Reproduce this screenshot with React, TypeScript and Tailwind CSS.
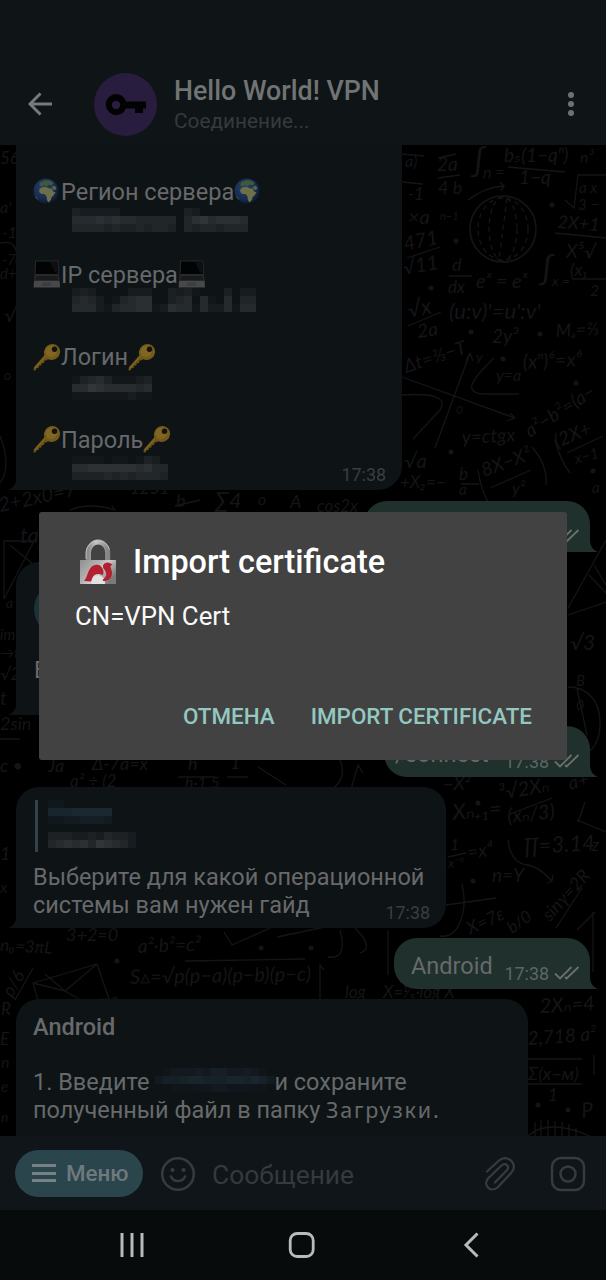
import React from "react";

const roboto = "font-['Roboto','Noto_Sans',sans-serif]";

function Mosaic({ rows, color, className }: { rows: string[]; color: string; className: string }) {
  const w = rows[0].length * 8;
  const h = rows.length * 8;
  return (
    <svg width={w} height={h} viewBox={`0 0 ${w} ${h}`} className={className} shapeRendering="crispEdges">
      {rows.map((row, y) =>
        row.split("").map((c, x) =>
          c === "0" ? null : (
            <rect key={`${x}-${y}`} x={x * 8} y={y * 8} width="8" height="8" fill={color} opacity={Number(c) / 9} />
          ),
        ),
      )}
    </svg>
  );
}

function Globe() {
  return (
    <svg width="28" height="28" viewBox="0 0 28 28" className="block shrink-0">
      <defs>
        <radialGradient id="sea" cx="0.4" cy="0.35" r="0.7">
          <stop offset="0" stopColor="#26436a" />
          <stop offset="0.7" stopColor="#16284e" />
          <stop offset="1" stopColor="#0c1733" />
        </radialGradient>
      </defs>
      <circle cx="13" cy="13" r="12.5" fill="url(#sea)" />
      <path d="M7 4.2 12 2.2l5 .3 3.600 2.300-1.600 2.700-3.500-.8-2 1.500-3-1-2.500 1.200L6.500 7z" fill="#41583a" />
      <path d="M6.500 11 9 9.300l4-.3 2.500 1.200 3.200.3 1.500 3 2.300.7-1.800 3-2 1.800-.8 3-2.400 2.600-1.600-2.600-.4-3.500-2-2.500H8.500L6.200 14z" fill="#6d6f48" />
      <path d="m18.500 9 3-1.500 2 2.500-1.500 2.300-2-.8z" fill="#59663f" />
      <path d="M2 17.500 4.500 20l.8 2L3 20z" fill="#41583a" />
    </svg>
  );
}

function Laptop() {
  return (
    <svg width="28" height="28" viewBox="0 0 28 28" className="block shrink-0">
      <path d="M2.500 1h22.500l.5 13.500H2z" fill="#020304" stroke="#2c2e30" strokeWidth="0.900" />
      <path d="M17 2h7.300l.4 11h-2.500z" fill="#0e0f10" />
      <path d="M1.500 15h24.500l.7 6H1z" fill="#26282a" />
      <path d="M3 17h21.500M2.500 19h22.500" stroke="#0a0b0c" strokeWidth="0.900" />
      <path d="M1 21h25.700l.3 6.500H.5z" fill="#46484a" />
      <path d="M9.500 22.500h8l.5 3.500h-9z" fill="#3b3d3f" />
    </svg>
  );
}

function KeyEmoji() {
  return (
    <svg width="28" height="28" viewBox="0 0 28 28" className="block shrink-0">
      <path
        d="M12 11.500.8 24.200.5 27.500l2.300-.2.600-2 2.200-.3.400-2.200 2.300-.3.400-2.300 2.300-.3.500-2.300 2.500-.4 1.500-2z"
        fill="#6b5219"
      />
      <path d="M12.500 13 2 25" stroke="#8a6c28" strokeWidth="1" />
      <ellipse cx="19" cy="9" rx="8.300" ry="7.800" fill="#735a1c" transform="rotate(-40 19 9)" />
      <ellipse cx="18.300" cy="8.300" rx="6" ry="5.500" fill="#806523" transform="rotate(-40 18.300 8.300)" />
      <circle cx="21.500" cy="6.200" r="2.700" fill="#14120b" />
    </svg>
  );
}

function Checks() {
  return (
    <svg width="26" height="14" viewBox="0 0 26 14" className="block shrink-0" fill="none" stroke="#68716d" strokeWidth="1.800">
      <path d="m1 7.500 5 5L17.500 1M11 11l1.600 1.500L24.500 1" />
    </svg>
  );
}

function LeftTail() {
  return (
    <svg width="12" height="14" viewBox="0 0 12 14" className="absolute bottom-0 -left-2">
      <path d="M8 0v3.500C8 9 4.500 12 0 14h12V0z" fill="#0e1316" />
    </svg>
  );
}

function OutBubble({ className, children }: { className: string; children?: React.ReactNode }) {
  return (
    <div className={`relative mr-4 flex h-[51px] shrink-0 items-end self-end rounded-t-[23px] rounded-bl-[23px] bg-[#20302c] ${className}`}>
      {children}
      <svg width="12" height="16" viewBox="0 0 12 16" className="absolute -right-2 bottom-0">
        <path d="M4 0v3.500C4 10 7 14 12 16H0V0z" fill="#20302c" />
      </svg>
    </div>
  );
}

type Note = [number, number, string, number?, number?];
const notes: Note[] = [
  [0, 164, "56", 17], [0, 213, "a'", 16], [2, 238, "-1", 16], [2, 265, "-7", 15], [0, 279, "d+", 15], [4, 322, "√", 20], [4, 380, "o", 14],
  [0, 512, "2+2x0=7", 20, -12], [130, 494, "1251", 17], [176, 507, "b", 18], [215, 508, "∑4", 22], [258, 505, "o", 16], [290, 508, "A", 18], [317, 512, "cos2x", 17],
  [20, 543, "ta", 22], [6, 608, "a", 14], [0, 640, "im", 15], [0, 658, "→t", 14], [0, 680, "√2", 17], [0, 705, "t", 20], [0, 730, "2sin", 18],
  [0, 772, "c •", 18], [48, 772, "Ja", 18], [92, 770, "Δ-7a=x", 18], [188, 770, "h", 18], [230, 769, "1", 18], [70, 787, "a² ÷ (2", 17], [185, 788, "h·1   5", 16],
  [0, 860, "1", 18], [0, 893, "x", 16], [0, 951, "n₀=3πL", 17, 3], [66, 941, "3+2=0", 18], [138, 953, "a²·b²=c²", 19, -2], [12, 998, "ρ/6", 18, -60], [110, 1005, "a", 15],
  [130, 984, "S▵=√p(p−a)(p−b)(p−c)", 20, -1], [345, 998, "log", 17], [383, 998, "X=⅟₅·log X", 17], [1, 1015, "R", 17], [0, 1045, "E", 17], [1, 1068, "n", 16], [1, 1092, "e", 15], [1, 1122, "n", 14],
  [405, 167, "a)", 16], [437, 171, "2a", 19], [438, 194, "4 b", 18], [472, 172, "∫", 32], [483, 178, "n =", 16], [504, 162, "bₛ(1−qⁿ)", 19], [519, 184, "1−q", 19], [580, 163, "n³", 16],
  [408, 200, "-1", 17], [408, 224, "×a", 20], [440, 220, "n−1", 11], [405, 251, "471", 20, -12], [404, 275, "√11", 20, -10], [452, 271, "d", 18], [448, 293, "dx", 17], [476, 288, "eˣ = eˣ", 20], [540, 280, "∫", 32], [552, 286, "x =", 14],
  [579, 193, "a x", 15], [578, 210, "3 −", 15], [557, 228, "2X+1", 18, 4], [566, 258, "X⁵√", 19], [570, 276, "(x₁", 17], [590, 296, "2", 16],
  [409, 318, "√x", 22, -12], [418, 338, "2a", 19, -8], [449, 319, "(u:v)'=u':v'", 22], [492, 343, "2y³", 19], [556, 337, "Mₐ=⅔", 18, -3],
  [406, 373, "Δt=⅔−T", 19, -18], [476, 362, "y", 14], [496, 381, "y=a", 16], [523, 369, "(xⁿ)⁶=x⁶", 20, -3], [530, 438, "a²−b²=(a−", 19, -33], [462, 444, "y=ctgx", 19, -3], [456, 414, "0", 12],
  [404, 468, "√a", 20], [400, 488, "+X₂=−", 17], [459, 480, "b", 17], [459, 495, "a", 15], [484, 477, "8X−X²", 19, -20], [512, 494, "y²", 16], [557, 448, "(2X+", 19, -22], [576, 464, "x−1", 15, -15], [592, 493, "a", 15],
  [570, 650, "√3", 21], [576, 686, "B", 15], [576, 710, "0", 14],
  [443, 790, "−X²", 18], [453, 820, "Xₙ₊₁=", 22, -5], [500, 800, "³√2Xₙ", 20, -10], [508, 823, "(xₙ/3)", 20, -6], [570, 790, "a+", 19, -15], [450, 850, "1", 16], [448, 868, "x⁻ⁿ", 14], [468, 859, "=x⁴", 19, -8], [524, 854, "∏=3.14", 22, -3], [592, 851, "z", 17],
  [492, 882, "n=Y", 19], [550, 922, "sinγ=2R", 18, -48], [470, 935, "X=7ε", 18, -25], [512, 934, "b/0", 17, -35],
  [540, 1013, "2Xₙ=4", 20, -3], [528, 1045, "2,718  a²", 19, -4], [528, 1080, "Σ(x−м)", 18], [548, 1101, "1", 17], [582, 1118, "P", 21, -6],
];

function Wallpaper() {
  return (
    <svg width="606" height="991" viewBox="0 145 606 991" className="absolute inset-0">
      <rect y="145" width="606" height="991" fill="#000001" />
      <g fill="#141517" fontFamily="Lato, 'DejaVu Sans', sans-serif" fontStyle="italic">
        {notes.map(([x, y, t, s = 18, r = 0], i) => (
          <text key={i} x={x} y={y} fontSize={s} transform={`rotate(${r} ${x} ${y})`}>
            {t}
          </text>
        ))}
      </g>
      <g fill="none" stroke="#141518" strokeWidth="1.300">
        <circle cx="503" cy="229" r="33" strokeWidth="1.600" />
        <g strokeDasharray="5 4">
          <ellipse cx="503" cy="229" rx="25" ry="31" />
          <ellipse cx="503" cy="229" rx="14" ry="32" />
          <path d="M507 198 499 260" />
        </g>
        <path d="M468 200Q485 187 504 186l-4-4m4 4-3 5M438 158l18-4M438 178l22-3M402 154l22 2M402 182l21 2M508 167l57 5M555 233l51 5M565 200l9 8 4-33h28M572 279h34" />
        <path d="M407 258l33-11M449 276h23M408 326l33-14" />
        <path d="M402 377l113 41-5-5m5 5-8 3M435 448l35-95-4 8m4-8 3 8M402 395c30-2 46 2 38 15l-27 29M494 358c-25 24-30 35-10 36h35" />
        <path d="M478 470q3 20 10 32M490 488l41-18M532 447q16 18 14 38M555 440q6 22 15 33M567 453l36-17M461 484h18" />
        <path d="M606 540l-38 68M568 615l38-13M589 575l17 18M594 565l12 20M568 687c20 0 32 14 32 36s-10 30-20 32M577 688l10 47" />
        <path d="M4 541v58l30-58zM10 545l24 20M0 243q20-4 16 20M0 436q12 30 0 47" />
        <path d="M70 510q20-8 45 0l-3-4M175 506l25-6M20 739H0M178 777h37m12 0h21M258 767l28 18M350 793l8-28 5 8M340 760q8 20-10 30" />
        <path d="M510 814l42-16M508 840c2 18 10 24 20 25 12 2 20 12 24 16m-5 2 5-2 1-6M448 857l18-4M446 905l50-7M462 884c6 25-2 55-22 52M582 888l-26 40M593 912v60M577 930l18-18M577 820l29 12M585 802l-7 20" />
        <path d="M224 932l8 13 45-20M277 937l48-10M340 930q8 30-12 27M355 928q20 20 5 25M388 930v45M320 1000v-35l4 5" />
        <path d="M33 983l64-19 12 35-70 5zM33 983l32 8 32-27M65 991l-20-17M65 991l14 8M15 1000l18-32M185 961l120-2" />
        <path d="M527 1059h55M527 1084h55M594 1055v20M528 1136q20-18 62 0M535 1122v14M541 1120v16M548 1120v16M555 1121v15M562 1122v14M569 1124v12M576 1128v8" />
      </g>
      <g fill="#131417">
        {[[456, 241], [552, 205], [471, 332], [540, 334], [431, 288], [576, 383], [451, 452], [593, 471], [503, 359], [478, 803], [473, 881], [538, 1105], [568, 1110], [117, 961], [311, 948], [261, 948]].map(
          ([x, y]) => (
            <circle key={`${x}-${y}`} cx={x} cy={y} r="2.500" />
          ),
        )}
      </g>
    </svg>
  );
}

function Field({ icon, label, children }: { icon: React.ReactNode; label: string; children: React.ReactNode }) {
  return (
    <div className="h-[82.5px]">
      <div className="flex h-[27.5px] items-center">
        {icon}
        <span className="mt-[2px]">{label}</span>
        {icon}
      </div>
      {children}
    </div>
  );
}

function Lock() {
  return (
    <svg width="38" height="46" viewBox="0 0 38 46" className="block">
      <defs>
        <linearGradient id="body" x1="0" x2="1" y1="0" y2="0.6">
          <stop offset="0" stopColor="#909090" />
          <stop offset="0.450" stopColor="#b4b4b4" />
          <stop offset="0.600" stopColor="#cfcfcf" />
          <stop offset="1" stopColor="#7a7a7a" />
        </linearGradient>
        <linearGradient id="bow" x1="0" x2="1">
          <stop offset="0" stopColor="#8d8d8d" />
          <stop offset="0.400" stopColor="#c4c4c4" />
          <stop offset="1" stopColor="#858585" />
        </linearGradient>
      </defs>
      <path d="M9.500 22V13.500a9.600 10.500 0 0 1 19.200 0V22" fill="none" stroke="url(#bow)" strokeWidth="5" />
      <path d="M7 20V13.500a12 12 0 0 1 23.500-3" fill="none" stroke="#c9c9c9" strokeWidth="0.900" />
      <rect x="1" y="21" width="36" height="24" fill="url(#body)" />
      <path d="M12 45c0-11 14-12 14 0z" fill="#e2e2e2" />
      <path d="M5 42c2-2 3-6 4.300-9C11 29 13 26.500 16 26c3-.6 5 0 6.500 2 2 2.500 2.800 5.500 1.200 8.500-1-1-2.500-1.500-4.400-1.500-3 0-5 1.500-6 4l-1.300 3.500z" fill="#b3202f" />
      <path d="M24 26.500c1-2.500 3.500-3.500 6-2.800l3.700 1.800-2.200 1.500c0 2 2 5 1.400 8.500-.8 4.500-4 6.800-8.900 6.500-.8-1 .5-2 1.500-3 2.500-2 2-5 .5-7.500-1-1.500-2.500-2.500-2-5z" fill="#b3202f" />
    </svg>
  );
}

export default function App() {
  return (
    <div className={`relative flex h-[1280px] w-[606px] flex-col overflow-hidden bg-black ${roboto}`}>
      <header className="flex h-[145px] shrink-0 bg-[#0f1416] pt-[73px]">
        <svg width="26" height="26" viewBox="0 0 26 26" className="mt-[18px] ml-[27px]" fill="none" stroke="#777a7b" strokeWidth="2.900">
          <path d="M25 13H3.500M13.500 2.500 3 13l10.500 10.500" />
        </svg>
        <div className="ml-[41px] flex size-[63px] items-center justify-center rounded-full bg-[#291d3f]">
          <svg width="42" height="24" viewBox="0 0 42 24" fill="#020203">
            <path fillRule="evenodd" d="M11 1a10.500 10.500 0 0 1 10 7.500h20v7h-3V20h-8v-4.500h-9A10.500 10.500 0 1 1 11 1zm0 6.800a4.200 4.200 0 1 0 0 8.400 4.200 4.200 0 0 0 0-8.400z" />
          </svg>
        </div>
        <div className="ml-[17px] flex flex-col">
          <div className="h-[36px] text-[26.8px] leading-[36px] font-medium text-[#707475]">Hello World! VPN</div>
          <div className="h-[23px] text-[20.8px] leading-[24px] text-[#353a3d]">Соединение...</div>
        </div>
        <div className="mt-[19px] mr-[32px] ml-auto flex flex-col gap-[3px]">
          <div className="size-[6px] rounded-full bg-[#6f7273]" />
          <div className="size-[6px] rounded-full bg-[#6f7273]" />
          <div className="size-[6px] rounded-full bg-[#6f7273]" />
        </div>
      </header>

      <main className="relative flex h-[991px] shrink-0 flex-col overflow-hidden text-[23.5px] leading-[27.5px] text-[#67696b]">
        <Wallpaper />
        <section className="relative ml-4 h-[345px] w-[386px] shrink-0 rounded-br-[24px] bg-[#0e1316] pt-[33px] pl-[17px]">
          <Field icon={<Globe />} label="Регион сервера">
            <Mosaic className="mt-[2.5px] ml-[39px] block" color="#3c3f42" rows={["3222220000000032000000", "5556565544444046756665", "4444343343443043443444"]} />
          </Field>
          <Field icon={<Laptop />} label="IP сервера">
            <Mosaic className="ml-[39px] block" color="#3a3d40" rows={["23200002220032310003022", "45420145660034505105044", "55521455661265515225155"]} />
          </Field>
          <Field icon={<KeyEmoji />} label="Логин">
            <Mosaic className="mt-[5px] ml-[39px] block" color="#3e4143" rows={["1345311123", "5576555545", "1111111211"]} />
          </Field>
          <Field icon={<KeyEmoji />} label="Пароль">
            <Mosaic className="mt-[3px] ml-[39px] block" color="#3e4143" rows={["111101101320", "556666665644", "333343434443"]} />
          </Field>
          <div className="absolute right-4 bottom-[4px] text-[17.9px] leading-[22px] text-[#393e41]">17:38</div>
          <LeftTail />
        </section>

        <OutBubble className="mt-[11px] w-[226px] justify-end pr-[10px] pb-[9px]">
          <Checks />
        </OutBubble>

        <section className="relative mt-[10px] ml-4 flex h-[153px] w-[386px] shrink-0 flex-col rounded-t-[23px] rounded-br-[23px] bg-[#0e1316] pt-[20px] pl-[18px]">
          <div className="size-[54px] rounded-full bg-[#1b3338]" />
          <div className="mt-[21px]">В</div>
          <LeftTail />
        </section>

        <OutBubble className="mt-[11px] w-[206px] pr-[10px] pl-[11px]">
          <span className="mb-[9px]">/connect</span>
          <span className="mr-[5px] mb-[4px] ml-auto text-[17.9px] leading-[22px] text-[#5c6663]">17:38</span>
          <span className="mb-[9px]"><Checks /></span>
        </OutBubble>

        <section className="relative mt-[10px] ml-4 h-[141px] w-[430px] shrink-0 rounded-t-[23px] rounded-br-[23px] bg-[#0e1316] pt-[13px] pl-[17px]">
          <div className="ml-[2px] h-[52px] border-l-[3px] border-[#304449] pl-[10px]">
            <Mosaic className="block" color="#202e37" rows={["22000000", "66677777", "22334443"]} />
            <Mosaic className="mt-[8px] block" color="#3c3f41" rows={["33322324332", "45656476542"]} />
          </div>
          <div className="mt-[12px]">
            Выберите для какой операционной
            <br />
            системы вам нужен гайд
          </div>
          <div className="absolute right-4 bottom-[4px] text-[17.9px] leading-[22px] text-[#393e41]">17:38</div>
          <LeftTail />
        </section>

        <OutBubble className="mt-[10px] w-[196px] pr-[10px] pl-[17px]">
          <span className="mb-[9px]">Android</span>
          <span className="mr-[5px] mb-[4px] ml-auto text-[17.9px] leading-[22px] text-[#5c6663]">17:38</span>
          <span className="mb-[9px]"><Checks /></span>
        </OutBubble>

        <section className="relative mt-[10px] ml-4 h-[160px] w-[512px] shrink-0 rounded-t-[23px] bg-[#0e1316] pt-[15px] pl-[17px]">
          <div className="font-medium">Android</div>
          <div className="mt-[27.5px] flex">
            <span>1. Введите</span>
            <Mosaic className="-mt-[1px] ml-[6px] block shrink-0" color="#1c2932" rows={["013334355334310", "355677666776863", "001112233222110"]} />
            <span className="-ml-[1px]">и сохраните</span>
          </div>
          <div className="whitespace-nowrap">
            полученный файл в папку <span className="font-['Noto_Sans',sans-serif] text-[21.5px] leading-none tracking-[1.8px]">Загрузки.</span>
          </div>
        </section>
      </main>

      <footer className="flex h-[74px] shrink-0 items-center bg-[#0f1518] pl-[15px]">
        <div className="flex h-[47px] w-[128px] items-center rounded-full bg-[#2b454c] pl-[17px]">
          <div className="flex w-[24px] flex-col gap-[4.5px]">
            <div className="h-[3px] bg-[#778286]" />
            <div className="h-[3px] bg-[#778286]" />
            <div className="h-[3px] bg-[#778286]" />
          </div>
          <span className="mt-[1px] ml-[10px] text-[22.4px] font-medium text-[#6f7a7d]">Меню</span>
        </div>
        <svg width="36" height="36" viewBox="0 0 36 36" className="mt-[2px] ml-[17px]" fill="none" stroke="#353b3e" strokeWidth="2.500">
          <circle cx="18" cy="18" r="15.800" />
          <path d="M11 20.500c2.500 6 11.500 6 14 0" strokeLinecap="round" />
          <circle cx="12.500" cy="14" r="2.100" fill="#353b3e" stroke="none" />
          <circle cx="23.500" cy="14" r="2.100" fill="#353b3e" stroke="none" />
        </svg>
        <span className="mt-[4px] ml-[16px] text-[26.4px] leading-[36px] text-[#343a3d]">Сообщение</span>
        <svg width="32" height="36" viewBox="0 0 32 36" className="mt-[2px] mr-[34px] ml-auto" fill="none" stroke="#353b3e" strokeWidth="2.300" strokeLinecap="round">
          <path d="M3 15.500 15 4.500c8-7.500 20 4 12.500 12L14 31C7 37.500-1.500 29.500 4 22.500L17.500 9.500c4-3.500 8.500 1 5.500 4.500L11 26.500" />
        </svg>
        <svg width="36" height="36" viewBox="0 0 36 36" className="mt-[2px] mr-[20px]" fill="none" stroke="#353b3e" strokeWidth="2.500">
          <rect x="2" y="2" width="32" height="32" rx="9" />
          <circle cx="18" cy="18" r="7.500" />
        </svg>
      </footer>

      <nav className="flex h-[70px] shrink-0 items-center bg-[#070b0c]">
        <svg width="26" height="26" viewBox="0 0 26 26" className="ml-[119px]" stroke="#b9bbbb" strokeWidth="3">
          <path d="M3 1v24M13 1v24M23 1v24" />
        </svg>
        <svg width="28" height="28" viewBox="0 0 28 28" className="ml-[143px]" fill="none" stroke="#b9bbbb" strokeWidth="2.800">
          <rect x="2.200" y="2.500" width="23" height="23" rx="7" />
        </svg>
        <svg width="16" height="26" viewBox="0 0 16 26" className="ml-[147px]" fill="none" stroke="#b9bbbb" strokeWidth="3">
          <path d="M14.500 1.500 3 13l11.500 11.500" />
        </svg>
      </nav>

      <div role="dialog" className="absolute top-[512px] left-[39px] flex h-[248px] w-[528px] flex-col rounded-[3px] bg-[#424242] pt-[27px] pl-[36px]">
        <div className="flex h-[46px] items-center pl-[4px]">
          <Lock />
          <h1 className="ml-[16px] text-[32.4px] leading-[46px] font-medium text-white">Import certificate</h1>
        </div>
        <p className="mt-[14px] text-[25.8px] leading-[34px] text-[#fafafa]">CN=VPN Cert</p>
        <div className="mt-[68px] mr-[35px] flex justify-end gap-[36px] text-[22.4px] leading-[30px] font-medium whitespace-nowrap text-[#93c8c1]">
          <button>ОТМЕНА</button>
          <button>IMPORT CERTIFICATE</button>
        </div>
      </div>
    </div>
  );
}
